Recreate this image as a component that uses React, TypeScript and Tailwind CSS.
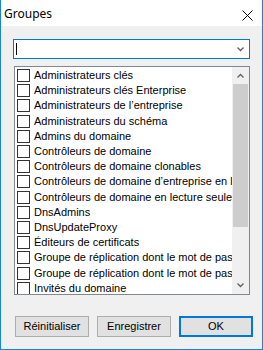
import React from "react";

const groups = [
  "Administrateurs clés",
  "Administrateurs clés Enterprise",
  "Administrateurs de l’entreprise",
  "Administrateurs du schéma",
  "Admins du domaine",
  "Contrôleurs de domaine",
  "Contrôleurs de domaine clonables",
  "Contrôleurs de domaine d’entreprise en lecture seule",
  "Contrôleurs de domaine en lecture seule",
  "DnsAdmins",
  "DnsUpdateProxy",
  "Éditeurs de certificats",
  "Groupe de réplication dont le mot de passe RODC est autorisé",
  "Groupe de réplication dont le mot de passe RODC est refusé",
  "Invités du domaine",
];

const winFont = { fontFamily: '"Liberation Sans", Arial, sans-serif' };

const Chevron = ({ up = false }: { up?: boolean }) => (
  <svg width="7" height="5" viewBox="0 0 7 5" className="block">
    <path
      d={up ? "M0.5 4.5 L3.5 1.5 L6.5 4.5" : "M0.5 0.5 L3.5 3.5 L6.5 0.5"}
      fill="none"
      stroke="#606060"
      strokeWidth="1.3"
    />
  </svg>
);

export default function App() {
  return (
    <div
      className="w-[263px] h-[350px] flex flex-col border-x border-b border-[#1883d7] bg-[#f0f0f0] text-black"
      style={winFont}
    >
      {/* Title bar */}
      <div className="h-[26px] bg-white flex items-center justify-between pl-[3px] pr-[9px]">
        <span
          className="text-[12px] leading-none pt-[2px]"
          style={{ fontFamily: '"Noto Sans", "Open Sans", sans-serif' }}
        >
          Groupes
        </span>
        <svg width="11" height="11" viewBox="0 0 11 11" className="block mt-[4px]">
          <path d="M0.5 0.5 L10.5 10.5 M10.5 0.5 L0.5 10.5" stroke="#000" strokeWidth="1" />
        </svg>
      </div>

      {/* Combobox */}
      <div className="mt-[13px] ml-[12px] w-[237px] h-[20px] bg-white border border-[#0078d7] flex items-center justify-between pl-[2px] pr-[5px]">
        <div className="w-px h-[12px] bg-black" />
        <Chevron />
      </div>

      {/* Checked list */}
      <div className="mt-[7px] ml-[13px] w-[236px] h-[229px] bg-white border border-[#828790] flex">
        <div className="flex-1 min-w-0 overflow-hidden pt-[1px]">
          {groups.map((g) => (
            <div key={g} className="h-[15.2px] flex items-center pl-[2px]">
              <div className="w-[13px] h-[13px] shrink-0 border border-[#333] bg-white" />
              <span className="ml-[4px] text-[11px] leading-none whitespace-nowrap">
                {g}
              </span>
            </div>
          ))}
        </div>
        <div className="w-[17px] bg-[#f0f0f0] flex flex-col">
          <div className="h-[17px] flex items-center justify-center">
            <Chevron up />
          </div>
          <div className="flex-1 px-px">
            <div className="h-[143px] bg-[#cdcdcd]" />
          </div>
          <div className="h-[17px] flex items-center justify-center">
            <Chevron />
          </div>
        </div>
      </div>

      {/* Buttons */}
      <div className="mt-[21px] ml-[14px] flex gap-[8px] text-[11px]">
        <button className="w-[74px] h-[21px] bg-[#e1e1e1] border border-[#adadad] leading-none">
          Réinitialiser
        </button>
        <button className="w-[74px] h-[21px] bg-[#e1e1e1] border border-[#adadad] leading-none">
          Enregistrer
        </button>
        <button className="w-[74px] h-[21px] bg-[#e1e1e1] border-2 border-[#0078d7] leading-none">
          OK
        </button>
      </div>
    </div>
  );
}
